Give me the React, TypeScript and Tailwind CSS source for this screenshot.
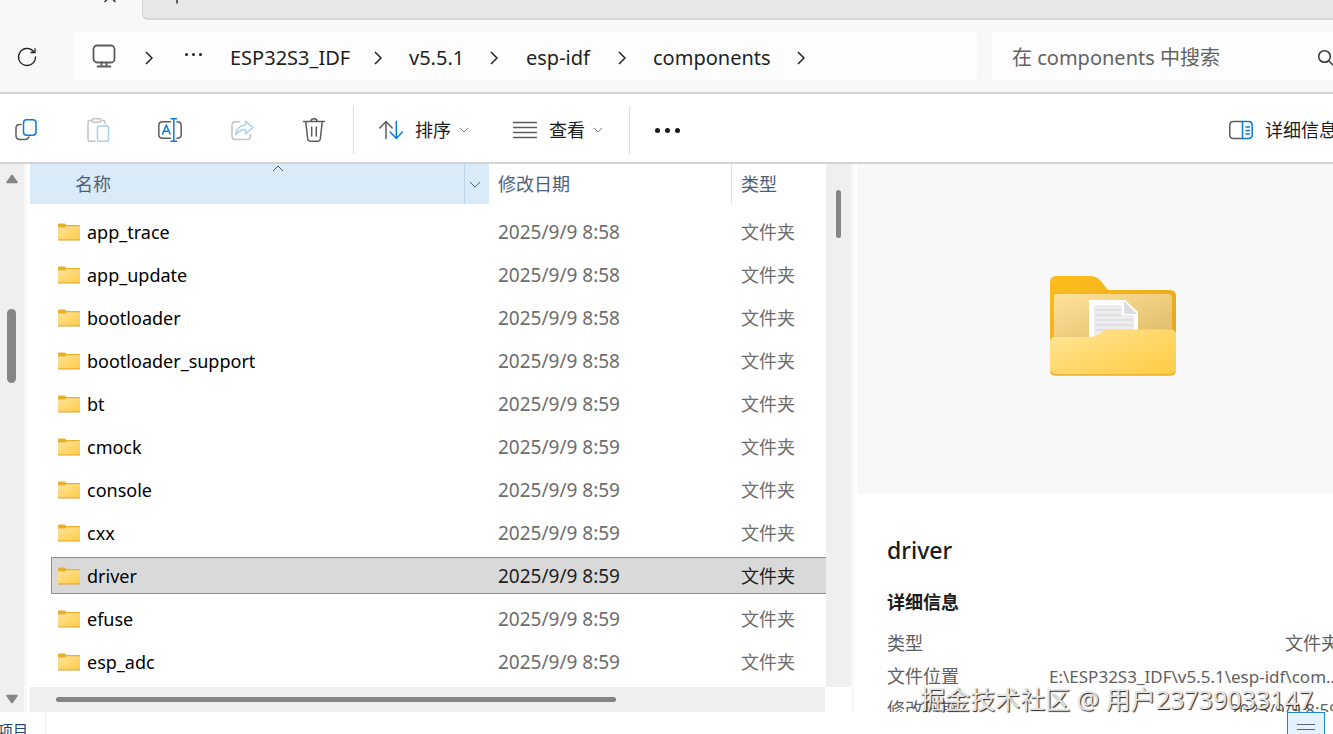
import type { ReactNode } from "react";

type Entry = { name: string; date: string };

const entries: Entry[] = [
  { name: "app_trace", date: "2025/9/9 8:58" },
  { name: "app_update", date: "2025/9/9 8:58" },
  { name: "bootloader", date: "2025/9/9 8:58" },
  { name: "bootloader_support", date: "2025/9/9 8:58" },
  { name: "bt", date: "2025/9/9 8:59" },
  { name: "cmock", date: "2025/9/9 8:59" },
  { name: "console", date: "2025/9/9 8:59" },
  { name: "cxx", date: "2025/9/9 8:59" },
  { name: "driver", date: "2025/9/9 8:59" },
  { name: "efuse", date: "2025/9/9 8:59" },
  { name: "esp_adc", date: "2025/9/9 8:59" },
];

const selected = "driver";
const GRAY = "#5c5c5c";
const BLUE = "#0a7be0";

const Icon = ({ children, className = "" }: { children: ReactNode; className?: string }) => (
  <svg
    viewBox="0 0 24 24"
    className={`h-6 w-6 shrink-0 ${className}`}
    fill="none"
    stroke={GRAY}
    strokeWidth="1.5"
    strokeLinecap="round"
    strokeLinejoin="round"
    aria-hidden="true"
  >
    {children}
  </svg>
);

const Chevron = () => (
  <svg viewBox="0 0 8 14" className="h-[14px] w-2 shrink-0" fill="none" stroke="#222" strokeWidth="1.5" aria-hidden="true">
    <path d="M1 1l6 6-6 6" />
  </svg>
);

const SmallDown = () => (
  <svg viewBox="0 0 10 6" className="h-[6px] w-[10px] shrink-0" fill="none" stroke="#777" aria-hidden="true">
    <path d="M1 1l4 4 4-4" />
  </svg>
);

const FolderIcon = () => (
  <svg viewBox="0 0 22 18" className="h-[18px] w-[22px] shrink-0" aria-hidden="true">
    <defs>
      <linearGradient id="folder" x1="0" y1="0" x2="1" y2="1">
        <stop offset="0" stopColor="#ffe49a" />
        <stop offset="1" stopColor="#ffcb45" />
      </linearGradient>
    </defs>
    <path d="M0 1.5Q0 .5 1 .5h5.500q.8 0 1.200.7L8.500 2H21q1 0 1 1v2H0z" fill="#e9b02c" />
    <path d="M0 4.500h7l1.500-1.200H22V17H0z" fill="url(#folder)" />
    <path d="M0 17h22" stroke="#dda22f" />
  </svg>
);

const BigFolder = () => (
  <svg viewBox="0 0 128 100" className="h-[100px] w-32" aria-hidden="true">
    <defs>
      <linearGradient id="bigBack" x1="0" y1="0" x2="1" y2="1">
        <stop offset="0" stopColor="#ffbe1c" />
        <stop offset="1" stopColor="#e3a11b" />
      </linearGradient>
      <linearGradient id="bigInner" x1="0" y1="0" x2="1" y2="1">
        <stop offset="0" stopColor="#ffe29a" />
        <stop offset="1" stopColor="#dfba68" />
      </linearGradient>
      <linearGradient id="bigFront" x1="0" y1="0" x2="1" y2="1">
        <stop offset="0" stopColor="#ffe597" />
        <stop offset="1" stopColor="#ffcb40" />
      </linearGradient>
    </defs>
    <path d="M1 6q0-6 6-6h34q6 0 10 4l8 10h62q6 0 6 6v60H1z" fill="url(#bigBack)" />
    <path d="M5 21q0-3 3-3h111q4 0 4 4v42H5z" fill="url(#bigInner)" />
    <path d="M40 24h36l13 12v40H40z" fill="#fff" />
    <path d="M45 29h28v10h12v25H45z" fill="#ededef" />
    <path d="M46 34h26M46 39h26M46 44h38M46 49h38M46 54h38" stroke="#dadadd" strokeWidth="1.500" />
    <path d="M75 25v11q0 2 2 2h11z" fill="#dcdce0" />
    <path d="M1 66q0-5 5-5h34q5 0 8-2l6-4q2-1.500 6-1.500h62q5 0 5 5V94q0 5-5 5H6q-5 0-5-5z" fill="url(#bigFront)" />
    <path d="M2 96q1 3 5 3h114q4 0 5-3" stroke="#e5ad30" strokeWidth="1.500" fill="none" />
  </svg>
);

const Triangle = ({ down = false }: { down?: boolean }) => (
  <svg viewBox="0 0 12 10" className={`h-[10px] w-3 ${down ? "rotate-180" : ""}`} fill="#858585" aria-hidden="true">
    <path d="M5 1.300q1-1.300 2 0l4.500 6.500q.8 1.400-.7 1.400H1.200q-1.500 0-.7-1.400z" />
  </svg>
);

const TitleBar = () => (
  <div className="flex h-5 shrink-0 overflow-hidden bg-[#f8f8f8]">
    <div className="w-[142px] shrink-0 pl-[104px]">
      <svg viewBox="0 0 12 3" className="h-[3px] w-3" stroke="#333" strokeWidth="1.500" aria-hidden="true">
        <path d="M.5 2L3-.5M11.500 2L9-.5" />
      </svg>
    </div>
    <div className="flex-1 rounded-bl-md border-b-2 border-l border-[#d6d6d6] bg-[#e7e7e7] pl-8">
      <svg viewBox="0 0 4 4" className="h-1 w-1" stroke="#333" strokeWidth="1.500" aria-hidden="true">
        <path d="M2 0v3.500" />
      </svg>
    </div>
  </div>
);

const AddressBar = () => (
  <div className="flex h-[74px] shrink-0 items-center border-b-2 border-[#d4d4d4] bg-[#f8f8f8] text-[20px] leading-7">
    <button type="button" aria-label="刷新" className="ml-[15px] mr-[35px] pt-[2px]">
      <Icon>
        <path d="M18.500 6.500A8.500 8.500 0 1 0 20.500 12" stroke="#222" strokeWidth="1.300" />
        <path d="M20 3.200v4.300h-4.500" stroke="#222" strokeWidth="1.300" strokeLinecap="butt" strokeLinejoin="miter" />
      </Icon>
    </button>
    <nav aria-label="路径" className="flex h-12 flex-1 items-center rounded bg-[#fdfdfd] pl-[18px] pt-[3px] text-[#1f1f1f]">
      <button type="button" aria-label="此电脑" className="mr-[29px] pb-[3px]">
        <Icon>
          <rect x="1.500" y="1.500" width="21" height="17" rx="3.500" strokeWidth="1.800" />
          <path d="M9.500 18.500v4M14.500 18.500v4M5.500 22.500h13" strokeWidth="1.800" />
        </Icon>
      </button>
      <Chevron />
      <button type="button" aria-label="更多" className="ml-8 mr-7 flex gap-1 pb-[6px]">
        <span className="h-[3px] w-[3px] rounded-full bg-[#222]" />
        <span className="h-[3px] w-[3px] rounded-full bg-[#222]" />
        <span className="h-[3px] w-[3px] rounded-full bg-[#222]" />
      </button>
      <button type="button" className="w-[118px] text-left">ESP32S3_IDF</button>
      <span className="ml-[26px] mr-[27px]"><Chevron /></span>
      <button type="button" className="w-[53px] text-left">v5.5.1</button>
      <span className="mx-[28px]"><Chevron /></span>
      <button type="button" className="w-[65px] text-left">esp-idf</button>
      <span className="mx-[27px]"><Chevron /></span>
      <button type="button" className="w-[116px] text-left">components</button>
      <span className="ml-7"><Chevron /></span>
    </nav>
    <div className="ml-[15px] flex h-12 w-[341px] shrink-0 items-center overflow-hidden rounded-l bg-[#fdfdfd] pl-5 pt-[3px]">
      <input
        type="text"
        aria-label="搜索"
        placeholder="在 components 中搜索"
        className="w-[305px] shrink-0 bg-transparent outline-none placeholder:text-[#636363]"
      />
      <svg viewBox="0 0 18 18" className="h-[18px] w-[18px] shrink-0" fill="none" stroke="#333" strokeWidth="1.500" aria-hidden="true">
        <circle cx="7.500" cy="7.500" r="5.800" />
        <path d="M12 12l5 5" />
      </svg>
    </div>
  </div>
);

const Toolbar = () => (
  <div className="flex h-[70px] shrink-0 items-center overflow-hidden whitespace-nowrap border-b-2 border-[#d4d4d4] bg-white pl-[14px] pt-1 text-[18px] leading-6 text-[#1b1b1b]">
    <div className="flex gap-12">
      <button type="button" aria-label="复制">
        <Icon>
          <path d="M7 6.500H5.500Q2 6.500 2 10v7.500Q2 21.500 6 21.500h5q3 0 3.800-2.500" />
          <rect x="9.500" y="1.800" width="12.500" height="15.500" rx="3.200" stroke={BLUE} />
        </Icon>
      </button>
      <button type="button" aria-label="粘贴" disabled>
        <Icon>
          <g stroke="#c3c3c3">
            <path d="M6 2.500H3.800Q2 2.500 2 4.300v17.200Q2 23.300 3.800 23.300H9M15 2.500h2.200q1.800 0 1.800 1.800V5.500" />
            <rect x="6" y=".8" width="9" height="3.400" rx="1.700" />
          </g>
          <rect x="11.500" y="8" width="11" height="15.300" rx="1.500" stroke="#a5d0ef" />
        </Icon>
      </button>
      <button type="button" aria-label="重命名">
        <Icon>
          <path d="M12.500 3.700H4.500Q.8 3.700.8 7.400v9.200q0 3.700 3.700 3.700h8M19 3.700q4.200 0 4.200 3.700v9.200q0 3.700-4.200 3.700" />
          <path d="M15.800.8v22.400M13 .8h5.600M13 23.200h5.600M4.500 16L8.300 7l3.800 9M5.700 13.200h5.200" stroke={BLUE} />
        </Icon>
      </button>
      <button type="button" aria-label="共享" disabled>
        <Icon>
          <path d="M9.500 3.700H5.300Q2 3.700 2 7v11q0 3.500 3.500 3.500h11.700q3.300 0 3.300-3.500v-1.500" stroke="#c3c3c3" />
          <path d="M15.700 3.200l7.300 6.300-7.300 6.200v-3.800q-6-.4-10 4.800.8-9 10-9.700z" stroke="#a5d0ef" />
        </Icon>
      </button>
      <button type="button" aria-label="删除">
        <Icon>
          <path d="M1.500 3.500h21M9 3.300q0-2.500 3-2.500t3 2.500M3.700 3.500l2 17.300q.3 2.500 2.800 2.500h7q2.500 0 2.800-2.500l2-17.300M9.700 9v9M14.300 9v9" />
        </Icon>
      </button>
    </div>
    <span className="ml-[27px] h-12 w-px bg-[#dedede]" />
    <button type="button" className="ml-[25px] flex items-center">
      <Icon>
        <path d="M7 20.500V3.500M.8 10L7 3.500l6.200 6.500" />
        <path d="M17.300 3.500v17M11.200 14l6.100 6.500 6.200-6.500" stroke={BLUE} />
      </Icon>
      <span className="ml-3 mr-2">排序</span>
      <SmallDown />
    </button>
    <button type="button" className="ml-11 flex items-center">
      <Icon>
        <path d="M.5 4.500h23M.5 9.500h23M.5 14.500h23M.5 19.500h23" />
      </Icon>
      <span className="ml-3 mr-2">查看</span>
      <SmallDown />
    </button>
    <span className="ml-[26px] h-12 w-px bg-[#dedede]" />
    <button type="button" aria-label="查看更多" className="ml-[25px] flex gap-[5px]">
      <span className="h-[5px] w-[5px] rounded-full bg-[#1b1b1b]" />
      <span className="h-[5px] w-[5px] rounded-full bg-[#1b1b1b]" />
      <span className="h-[5px] w-[5px] rounded-full bg-[#1b1b1b]" />
    </button>
    <button type="button" className="-mr-1 ml-auto flex shrink-0 items-center">
      <Icon>
        <path d="M13.500 3.500H4.500Q.8 3.500.8 7.200v9.600q0 3.700 3.700 3.700h9" />
        <path d="M13.500 3.500h6q3.700 0 3.700 3.700v9.600q0 3.700-3.700 3.700h-6zM17 9h3.500M17 12.500h3.500M17 16h3.500" stroke={BLUE} />
      </Icon>
      <span className="ml-3">详细信息</span>
    </button>
  </div>
);

const FileTable = () => (
  <table className="w-full table-fixed border-collapse text-left text-[18px] leading-6">
    <colgroup>
      <col />
      <col className="w-[243px]" />
      <col className="w-[94px]" />
    </colgroup>
    <thead className="text-[#4c607a]">
      <tr>
        <th scope="col" className="p-0 pb-[6px] font-normal">
          <div className="relative flex h-10 items-center bg-[#d9eaf9] pl-[45px]">
            名称
            <svg viewBox="0 0 12 7" className="absolute left-[242px] top-px h-[7px] w-3" fill="none" stroke="#555" aria-hidden="true">
              <path d="M1 6l5-5 5 5" />
            </svg>
            <span className="ml-auto flex h-full w-[25px] items-center justify-center border-l border-[#bfd5e8] pr-1">
              <svg viewBox="0 0 12 7" className="h-[7px] w-3" fill="none" stroke="#4c607a" aria-hidden="true">
                <path d="M1 1l5 5 5-5" />
              </svg>
            </span>
          </div>
        </th>
        <th scope="col" className="p-0 pb-[6px] font-normal">
          <div className="flex h-10 items-center border-r border-[#e2e2e2] pl-[9px]">修改日期</div>
        </th>
        <th scope="col" className="p-0 pb-[6px] font-normal">
          <div className="flex h-10 items-center pl-[9px]">类型</div>
        </th>
      </tr>
    </thead>
    <tbody>
      {entries.map((entry) => {
        const active = entry.name === selected;
        return (
          <tr key={entry.name} aria-selected={active} className={active ? "text-[#1f1f1f]" : "text-[#6d6d6d]"}>
            <td className="py-[3px] pl-[21px] pr-0">
              <div className={`flex h-[37px] items-center border border-r-0 pl-[6px] ${active ? "border-[#8e8e8e] bg-[#d9d9d9]" : "border-transparent"}`}>
                <FolderIcon />
                <span className="ml-[7px] text-black">{entry.name}</span>
              </div>
            </td>
            <td className="px-0 py-[3px]">
              <div className={`flex h-[37px] items-center border-y pl-[9px] text-[19px] ${active ? "border-[#8e8e8e] bg-[#d9d9d9]" : "border-transparent"}`}>
                {entry.date}
              </div>
            </td>
            <td className="px-0 py-[3px]">
              <div className={`flex h-[37px] items-center border-y pl-[9px] ${active ? "border-[#8e8e8e] bg-[#d9d9d9]" : "border-transparent"}`}>
                文件夹
              </div>
            </td>
          </tr>
        );
      })}
    </tbody>
  </table>
);

const DetailsPane = () => (
  <aside className="flex min-w-0 flex-1 flex-col overflow-hidden bg-white">
    <div className="flex h-[330px] shrink-0 items-center justify-center bg-[#f8f8f8] pb-[6px] pl-9">
      <BigFolder />
    </div>
    <div className="-mr-[6px] pl-[30px] pt-10">
      <h2 className="text-[23px] font-medium leading-8 text-[#1b1b1b]">driver</h2>
      <h3 className="mt-6 text-[18px] font-bold leading-6 text-[#1b1b1b]">详细信息</h3>
      <dl className="mt-[13px] text-[18px] leading-[33px] text-[#606060]">
        <div className="flex justify-between">
          <dt>类型</dt>
          <dd>文件夹</dd>
        </div>
        <div className="-mr-1 flex justify-between">
          <dt>文件位置</dt>
          <dd className="w-[294px] truncate text-[17px]">E:\ESP32S3_IDF\v5.5.1\esp-idf\components</dd>
        </div>
        <div className="flex justify-between">
          <dt>修改日期</dt>
          <dd className="text-[17px]">2025/9/9 8:59</dd>
        </div>
      </dl>
    </div>
  </aside>
);

export default function App() {
  return (
    <div className="relative flex h-screen flex-col overflow-hidden bg-white font-['Noto_Sans','Noto_Sans_CJK_SC',sans-serif]">
      <TitleBar />
      <AddressBar />
      <Toolbar />

      <main className="flex min-h-0 flex-1">
        {/* Navigation pane scrollbar */}
        <div className="flex w-6 shrink-0 flex-col items-center justify-between bg-[#efefef] pb-2 pr-px pt-[10px]">
          <Triangle />
          <div className="mb-[186px] h-[74px] w-[9px] rounded-full bg-[#858585]" />
          <Triangle down />
        </div>
        <div className="mr-[3px] w-[3px] shrink-0 bg-[#f8f8f8]" />

        {/* File list */}
        <div className="flex w-[821px] shrink-0 flex-col">
          <div className="flex min-h-0 flex-1">
            <div className="min-w-0 flex-1 overflow-hidden">
              <FileTable />
            </div>
            <div className="w-[25px] shrink-0 bg-[#efefef] pl-[10px] pt-[26px]">
              <div className="h-12 w-[5px] rounded-full bg-[#858585]" />
            </div>
          </div>
          <div className="mr-[26px] flex h-[25px] shrink-0 items-center bg-[#efefef] pl-[26px]">
            <div className="h-[5px] w-[560px] rounded-full bg-[#858585]" />
          </div>
        </div>
        <div className="mr-[3px] w-[3px] shrink-0 bg-[#f8f8f8]" />

        <DetailsPane />
      </main>

      {/* Status bar */}
      <footer className="flex h-[22px] shrink-0 items-start overflow-hidden bg-white text-[15px] leading-9 text-[#24466e]">
        <div className="-ml-[2px] w-[48px] shrink-0 border-r border-[#f0f0f0]">项目</div>
        <button
          type="button"
          aria-label="详细信息视图"
          className="ml-auto mr-2 flex h-9 w-[38px] shrink-0 flex-col items-center gap-1 border border-[#1a86d0] bg-[#e3f2fc] pt-[11px]"
        >
          <span className="h-px w-[18px] bg-[#5c6670]" />
          <span className="h-px w-[18px] bg-[#5c6670]" />
        </button>
      </footer>

      <p className="absolute bottom-[17px] right-[20px] text-[25px] leading-9 text-[#e4e4e4] [text-shadow:1px_1px_1px_#222]">
        掘金技术社区 @ 用户23739033147
      </p>
    </div>
  );
}
